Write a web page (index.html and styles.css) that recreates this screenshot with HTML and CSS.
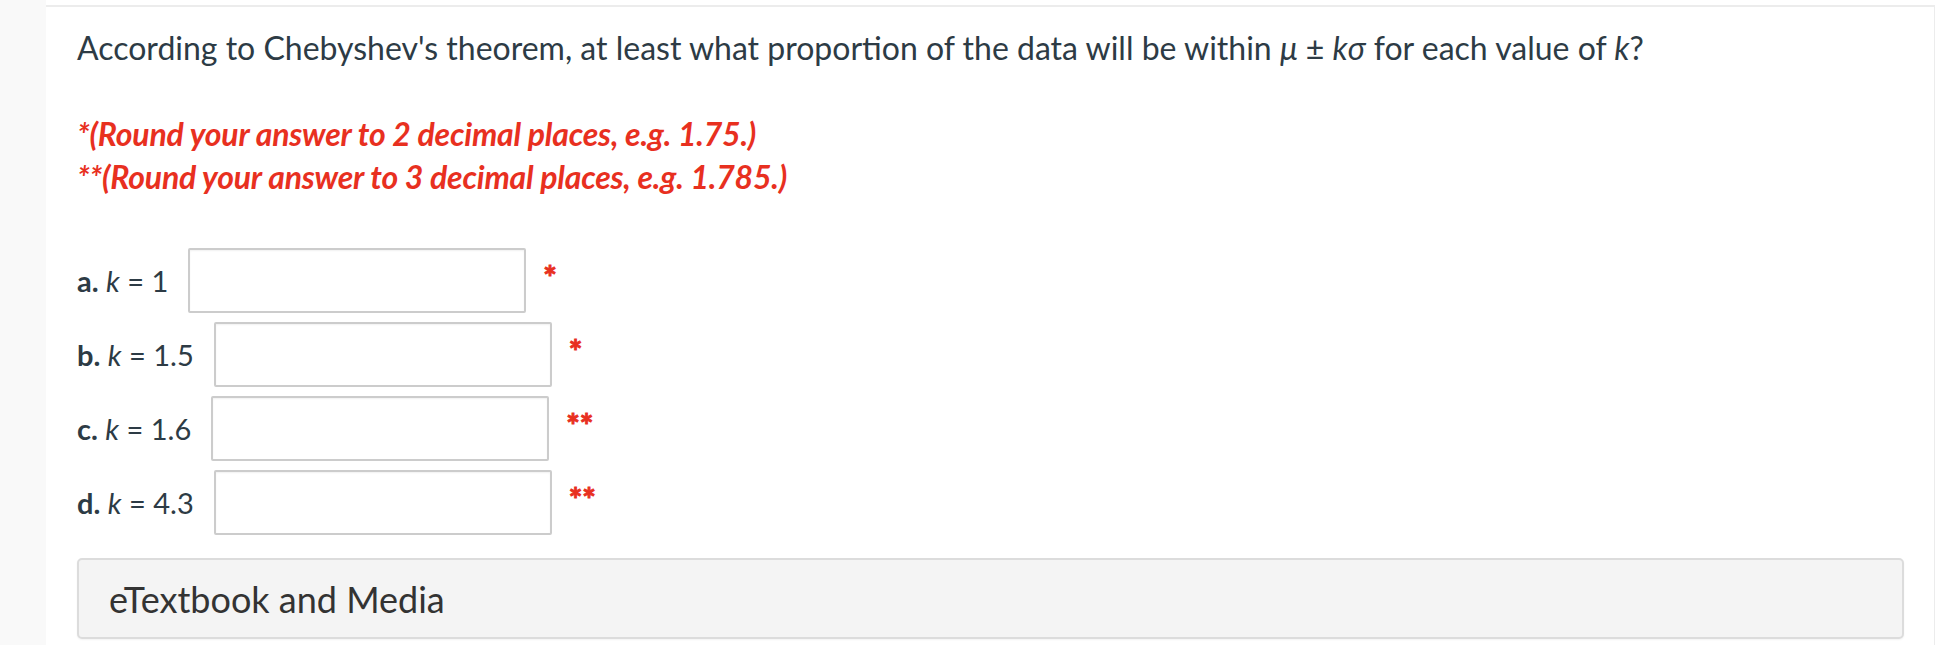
FILE: index.html
```html
<!DOCTYPE html>
<html lang="en">
<head>
<meta charset="utf-8">
<title>Chebyshev's theorem</title>
<link rel="stylesheet" href="styles.css">
</head>
<body>
<div class="page">
  <aside class="rail"></aside>
  <main class="panel">
    <section class="card">
      <p class="question">According to Chebyshev's theorem, at least what proportion of the data will be within <i>μ</i> ± <i>kσ</i> for each value of <i>k</i>?</p>
      <div class="notes">
        <p>*(Round your answer to 2 decimal places, e.g. 1.75.)</p>
        <p>**(Round your answer to 3 decimal places, e.g. 1.785.)</p>
      </div>
      <div class="rows">
        <div class="row"><label class="lbl"><b>a.</b> <i>k</i> = 1</label><input class="answer" type="text"><span class="req">*</span></div>
        <div class="row"><label class="lbl"><b>b.</b> <i>k</i> = 1.5</label><input class="answer" type="text"><span class="req">*</span></div>
        <div class="row"><label class="lbl"><b>c.</b> <i>k</i> = 1.6</label><input class="answer" type="text"><span class="req">**</span></div>
        <div class="row"><label class="lbl"><b>d.</b> <i>k</i> = 4.3</label><input class="answer" type="text"><span class="req">**</span></div>
      </div>
      <div class="media">eTextbook and Media</div>
    </section>
  </main>
</div>
</body>
</html>
```

FILE: styles.css
```css
html, body {
  margin: 0;
  padding: 0;
  background: #ffffff;
  overflow: hidden;
}

body {
  font-family: Lato, "Noto Sans", "Liberation Sans", sans-serif;
  color: #2d3b45;
}

.page {
  display: flex;
  height: 645px;
}

.rail {
  width: 46px;
  flex: 0 0 46px;
  background: #f9f9f9;
}

.panel {
  flex: 1;
  padding-top: 5px;
  background: #ffffff;
}

.card {
  border-top: 2px solid #ececec;
  border-right: 1px solid #ececec;
  padding: 19px 30px 0 31px;
  height: 100%;
  box-sizing: border-box;
}

.question {
  margin: 0;
  font-size: 32px;
  line-height: 43px;
}

.question i {
  font-style: italic;
}

.notes {
  margin-top: 43px;
  color: #e8301f;
  font-weight: 700;
  font-style: italic;
  font-size: 32px;
  line-height: 43px;
  letter-spacing: -0.2px;
}

.notes p {
  margin: 0;
}

.rows {
  margin-top: 50px;
  display: flex;
  flex-direction: column;
  gap: 9px;
}

.row {
  display: flex;
  align-items: center;
  height: 65px;
}

.lbl {
  font-size: 29px;
  line-height: 30px;
  margin-right: 20px;
  white-space: pre;
}

.lbl b {
  font-weight: 700;
}

.answer {
  width: 338px;
  height: 65px;
  box-sizing: border-box;
  border: 2px solid #cccccc;
  border-radius: 2px;
  background: #ffffff;
  box-shadow: inset 0 1px 2px rgba(0, 0, 0, 0.06);
  margin: 0;
  padding: 0 10px;
  font: inherit;
}

.req {
  align-self: flex-start;
  margin-left: 17px;
  margin-top: 15px;
  color: #e8301f;
  font-weight: 700;
  font-size: 32px;
  line-height: 30px;
  -webkit-text-stroke: 1px #e8301f;
}

.media {
  margin-top: 23px;
  height: 81px;
  box-sizing: border-box;
  border: 2px solid #dcdcdc;
  border-radius: 5px;
  background: #f4f4f4;
  box-shadow: 0 1px 2px rgba(0, 0, 0, 0.05);
  display: flex;
  align-items: center;
  padding-left: 30px;
  font-size: 36px;
  color: #333333;
}
```
